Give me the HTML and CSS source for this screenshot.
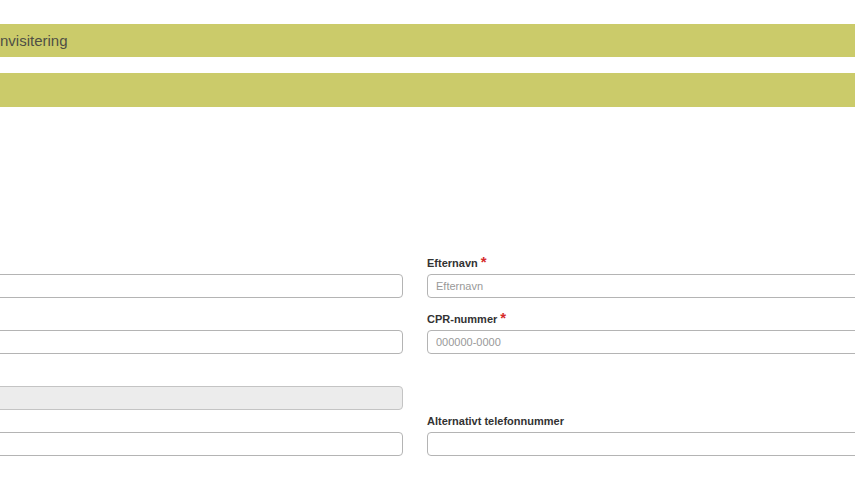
FILE: index.html
```html
<!DOCTYPE html>
<html lang="da">
<head>
    <meta charset="UTF-8">
    <meta name="viewport" content="width=device-width, initial-scale=1.0">
    <title>Genvisitering</title>
    <link rel="stylesheet" href="styles.css">
</head>
<body>
    <div class="page">
        <div class="section-bar">Genvisitering</div>
        <div class="section-bar section-bar-empty"></div>

        <form class="patient-form">
            <div class="form-group">
                <label for="fornavn">Fornavn <span class="required">*</span></label>
                <input type="text" id="fornavn">
            </div>
            <div class="form-group">
                <label for="efternavn">Efternavn <span class="required">*</span></label>
                <input type="text" id="efternavn" placeholder="Efternavn">
            </div>

            <div class="form-group">
                <label for="telefon">Telefonnummer</label>
                <input type="text" id="telefon">
            </div>
            <div class="form-group">
                <label for="cpr">CPR-nummer <span class="required">*</span></label>
                <input type="text" id="cpr" placeholder="000000-0000">
            </div>

            <div class="form-group form-group-tight">
                <label for="alder">Alder</label>
                <input type="text" id="alder" disabled>
            </div>
            <div class="form-group form-group-tight"></div>

            <div class="form-group">
                <label for="email">E-mail</label>
                <input type="text" id="email">
            </div>
            <div class="form-group">
                <label for="alt-telefon">Alternativt telefonnummer</label>
                <input type="text" id="alt-telefon">
            </div>
        </form>
    </div>
</body>
</html>
```

FILE: styles.css
```css
* {
    margin: 0;
    padding: 0;
    box-sizing: border-box;
    font-family: 'Liberation Sans', Arial, sans-serif;
}

body {
    background: #fff;
    overflow: hidden;
}

.page {
    margin-left: -400px;
    width: 1630px;
    padding-top: 24px;
}

.section-bar {
    background: #cbcb6a;
    color: #4f4f45;
    font-size: 15px;
    height: 33px;
    line-height: 33px;
    padding-left: 380px;
    margin-bottom: 16px;
}

.section-bar-empty {
    height: 34px;
}

.patient-form {
    display: grid;
    grid-template-columns: 1fr 1fr;
    column-gap: 24px;
    margin-top: 149px;
}

.form-group {
    display: flex;
    flex-direction: column;
    margin-bottom: 14px;
}

.form-group-tight {
    margin-bottom: 4px;
}

.form-group label {
    color: #333;
    font-size: 11px;
    font-weight: bold;
    line-height: 15px;
    margin-bottom: 3px;
}

.required {
    color: #d62b2b;
    font-size: 15px;
    line-height: 10px;
}

.form-group input {
    height: 24px;
    padding: 0 8px;
    border: 1px solid #b4b4b4;
    border-radius: 4px;
    background: #fff;
    color: #333;
    font-size: 11px;
}

.form-group input::placeholder {
    color: #999;
}

.form-group input:disabled {
    background: #ececec;
    border-color: #c4c4c4;
}
```
